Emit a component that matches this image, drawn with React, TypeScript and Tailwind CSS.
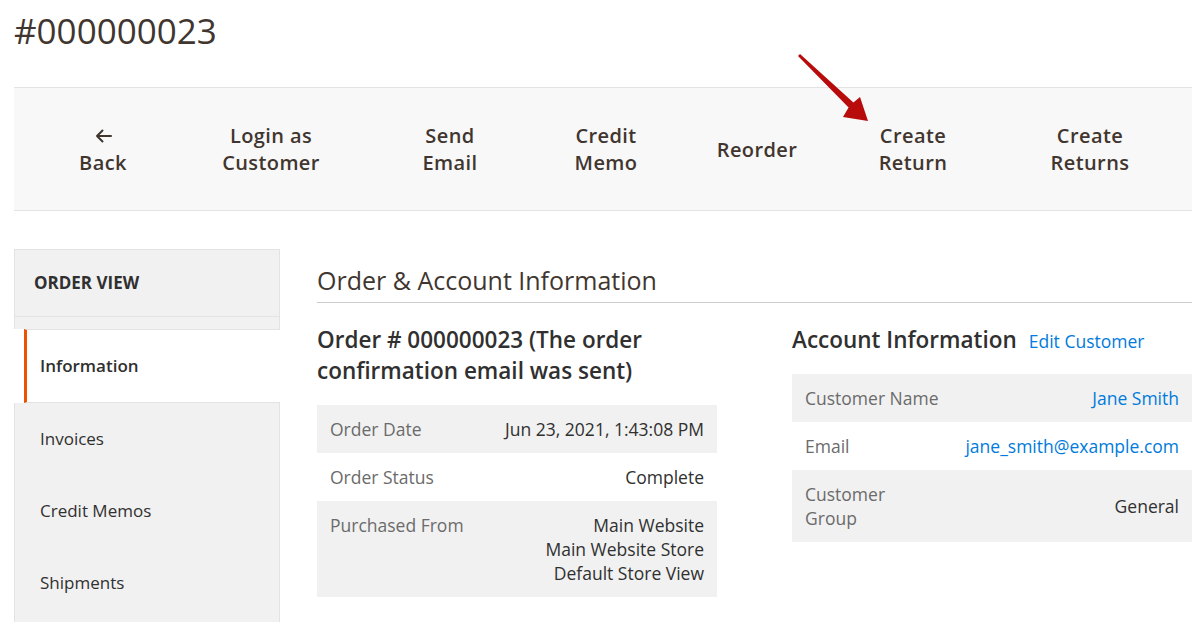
import React from 'react';

const font = { fontFamily: '"Open Sans", "Liberation Sans", sans-serif' };

function BackArrow() {
  return (
    <div className="flex h-[27px] items-center justify-center">
      <svg width="17" height="14" viewBox="0 0 17 14">
        <path d="M16 7H2M7.5 1.5 2 7l5.5 5.5" fill="none" stroke="#41362f" strokeWidth="2" strokeLinecap="round" strokeLinejoin="round" />
      </svg>
    </div>
  );
}

const buttons = [
  { label: ['Login as', 'Customer'], w: 'w-[210px]' },
  { label: ['Send', 'Email'], w: 'w-[148px]' },
  { label: ['Credit', 'Memo'], w: 'w-[164px]' },
  { label: ['Reorder'], w: 'w-[138px]' },
  { label: ['Create', 'Return'], w: 'w-[174px]' },
  { label: ['Create', 'Returns'], w: 'w-[180px]' },
];

function InfoTable({ rows }: { rows: { label: React.ReactNode; value: React.ReactNode; link?: boolean }[] }) {
  return (
    <div className="flex flex-col">
      {rows.map((r, i) => (
        <div
          key={i}
          className={`flex justify-between px-[13px] py-[12px] text-[17.5px] leading-[24px] ${i % 2 === 0 ? 'bg-[#f1f1f1]' : 'bg-white'}`}
        >
          <div className="text-[#6b6b6b]">{r.label}</div>
          <div className={`text-right ${r.link ? 'text-[#007bdb]' : 'text-[#303030]'}`}>{r.value}</div>
        </div>
      ))}
    </div>
  );
}

export default function App() {
  return (
    <div className="relative h-[622px] overflow-hidden bg-white pl-[14px] pr-[9px]" style={font}>
      <h1 className="pt-[8px] text-[35px] leading-[46px] text-[#41362f]">#000000023</h1>

      <div className="mt-[33px] flex h-[124px] items-center border-y border-[#e3e3e3] bg-[#f8f8f8] pl-[26px] text-[20px] font-semibold leading-[27px] tracking-[0.02em] text-[#41362f]">
        <div className="w-[126px] text-center">
          <BackArrow />
          <div>Back</div>
        </div>
        {buttons.map((b, i) => (
          <div key={i} className={`${b.w} text-center`}>
            {b.label.map((l) => (
              <div key={l}>{l}</div>
            ))}
          </div>
        ))}
      </div>

      <div className="mt-[38px] flex">
        <div className="w-[266px] shrink-0">
          <div className="border-x border-t border-[#e3e3e3] bg-[#f1f1f1]">
            <div className="flex h-[67px] items-center border-b border-[#e3e3e3] px-[19px] text-[17px] font-bold text-[#303030]">
              ORDER VIEW
            </div>
            <div className="h-[12px]" />
          </div>
          <div className="bg-white pl-[10px]">
            <div className="flex h-[74px] items-center border-y border-[#e3e3e3] border-l-[3px] border-l-[#eb5202] pl-[13px] text-[17px] font-semibold text-[#303030]">
              Information
            </div>
          </div>
          <div className="border-x border-[#e3e3e3] bg-[#f1f1f1]">
            {['Invoices', 'Credit Memos', 'Shipments', ''].map((t, i) => (
              <div key={i} className="flex h-[72px] items-center pl-[25px] text-[17px] text-[#303030]">
                {t}
              </div>
            ))}
          </div>
        </div>

        <div className="ml-[37px] flex-1 pt-[13px]">
          <div className="border-b border-[#cccccc] pb-[4px] text-[25px] leading-[36px] text-[#41362f]">
            Order &amp; Account Information
          </div>

          <div className="mt-[21px] flex gap-[75px]">
            <div className="w-[400px]">
              <h2 className="text-[22.5px] font-semibold leading-[31px] text-[#303030]">
                Order # 000000023 (The order confirmation email was sent)
              </h2>
              <div className="mt-[19px]">
                <InfoTable
                  rows={[
                    { label: 'Order Date', value: 'Jun 23, 2021, 1:43:08 PM' },
                    { label: 'Order Status', value: 'Complete' },
                    {
                      label: 'Purchased From',
                      value: (
                        <>
                          Main Website
                          <br />
                          Main Website Store
                          <br />
                          Default Store View
                        </>
                      ),
                    },
                  ]}
                />
              </div>
            </div>

            <div className="w-[400px]">
              <div className="flex items-baseline gap-[12px]">
                <h2 className="text-[22.5px] font-semibold leading-[31px] text-[#303030]">Account Information</h2>
                <span className="text-[17.5px] text-[#007bdb]">Edit Customer</span>
              </div>
              <div className="mt-[19px]">
                <InfoTable
                  rows={[
                    { label: 'Customer Name', value: 'Jane Smith', link: true },
                    { label: 'Email', value: 'jane_smith@example.com', link: true },
                    {
                      label: (
                        <>
                          Customer
                          <br />
                          Group
                        </>
                      ),
                      value: <div className="pt-[12px]">General</div>,
                    },
                  ]}
                />
              </div>
            </div>
          </div>
        </div>
      </div>

      <svg className="pointer-events-none absolute left-[790px] top-[50px]" width="90" height="80" viewBox="0 0 90 80">
        <path d="M10 3.9 L63.4 52.5 L70 47 L78 71 L53 67 L58.6 57.5 L8 6.1 Z" fill="#b80b0b" />
      </svg>
    </div>
  );
}
